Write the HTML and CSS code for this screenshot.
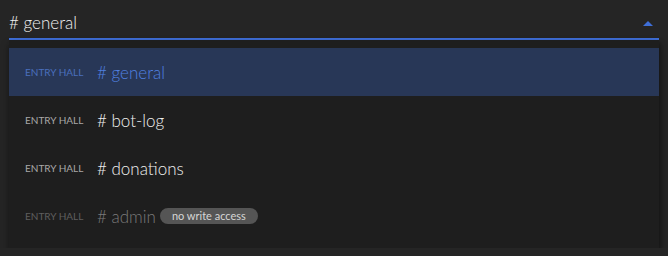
FILE: index.html
```html
<!DOCTYPE html>
<html>
<head>
<meta charset="utf-8">
<link rel="stylesheet" href="styles.css">
</head>
<body>
<div class="select">
  <div class="field">
    <span class="value"># general</span>
    <span class="arrow"></span>
  </div>
  <ul class="menu">
    <li class="item active"><span class="cat">ENTRY HALL</span><span class="name"># general</span></li>
    <li class="item"><span class="cat">ENTRY HALL</span><span class="name"># bot-log</span></li>
    <li class="item"><span class="cat">ENTRY HALL</span><span class="name"># donations</span></li>
    <li class="item disabled"><span class="cat">ENTRY HALL</span><span class="name"># admin</span><span class="badge">no write access</span></li>
  </ul>
</div>
</body>
</html>
```

FILE: styles.css
```css
html, body {
  margin: 0;
  padding: 0;
  background: #252525;
  font-family: "Lato", "Noto Sans", sans-serif;
  font-weight: 300;
  color: #e6e6e6;
}
.select {
  padding: 0 9px;
}
.field {
  display: flex;
  align-items: center;
  justify-content: space-between;
  height: 38px;
  border-bottom: 2px solid #3f6fd8;
}
.value {
  font-size: 17px;
  line-height: 20px;
  color: #f0f0f0;
  padding-top: 8px;
}
.arrow {
  width: 0;
  height: 0;
  border-left: 5px solid transparent;
  border-right: 5px solid transparent;
  border-bottom: 5px solid #3f6fd8;
  margin-right: 6px;
  margin-top: 8px;
}
.menu {
  list-style: none;
  margin: 0;
  padding: 8px 0;
  background: #1e1e1e;
  box-shadow: 0 5px 8px rgba(0,0,0,0.35), 2px 2px 4px rgba(0,0,0,0.25);
}
.item {
  display: flex;
  align-items: center;
  height: 48px;
  padding-left: 16px;
}
.cat {
  font-size: 10px;
  font-weight: 400;
  color: #a8a8a8;
  width: 60px;
  margin-right: 12px;
  white-space: nowrap;
  letter-spacing: 0;
}
.name {
  font-size: 17px;
  color: #f0f0f0;
}
.active {
  background: #283757;
}
.active .cat {
  color: #4a6fbd;
}
.active .name {
  color: #5080e0;
}
.disabled .cat {
  color: #5e5e5e;
}
.disabled .name {
  color: #7a7a7a;
}
.badge {
  margin-left: 4px;
  height: 16px;
  line-height: 16px;
  padding: 0 12px;
  border-radius: 8px;
  background: #555555;
  color: #d6d6d6;
  font-size: 11px;
  font-weight: 400;
}
```
